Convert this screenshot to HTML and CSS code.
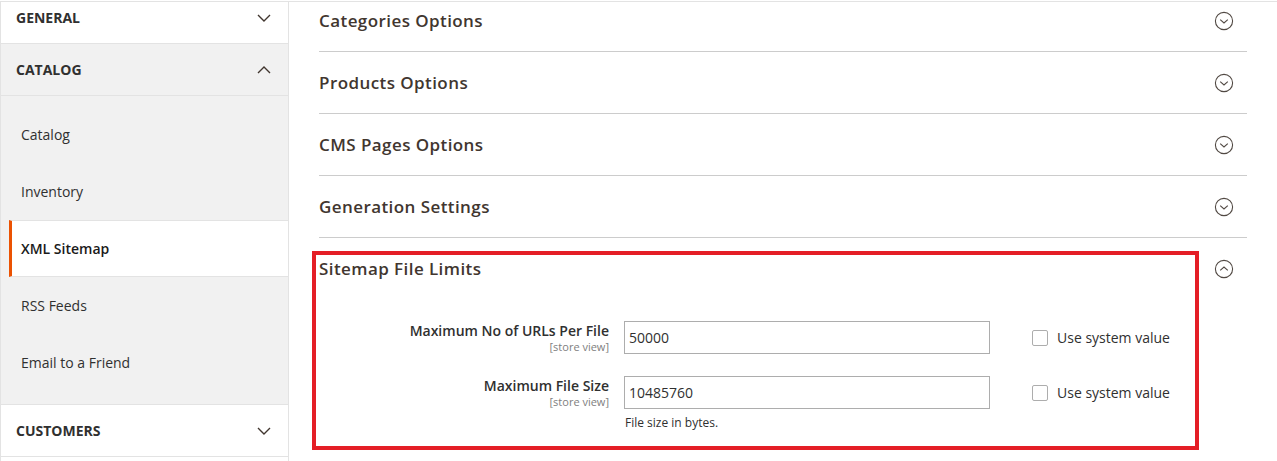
FILE: index.html
```html
<!DOCTYPE html>
<html lang="en">
<head>
  <meta charset="UTF-8" />
  <title>Configuration - XML Sitemap</title>
  <link rel="stylesheet" href="styles.css">
</head>
<body>
  <div class="layout">
    <aside class="sidebar">
      <div class="nav-title">
        <span>General</span>
        <svg class="chevron" width="14" height="8" viewBox="0 0 14 8"><polyline points="1,1 7,7 13,1" /></svg>
      </div>
      <div class="nav-title open">
        <span>Catalog</span>
        <svg class="chevron" width="14" height="8" viewBox="0 0 14 8"><polyline points="1,7 7,1 13,7" /></svg>
      </div>
      <ul class="nav-items">
        <li>Catalog</li>
        <li>Inventory</li>
        <li class="active">XML Sitemap</li>
        <li>RSS Feeds</li>
        <li>Email to a Friend</li>
      </ul>
      <div class="nav-title">
        <span>Customers</span>
        <svg class="chevron" width="14" height="8" viewBox="0 0 14 8"><polyline points="1,1 7,7 13,1" /></svg>
      </div>
    </aside>

    <main class="main">
      <section class="group">
        <div class="group-head">
          <h2>Categories Options</h2>
          <svg class="toggle" width="20" height="20" viewBox="0 0 20 20"><circle cx="10" cy="10" r="8.6" /><polyline points="6.2,8.6 10,12 13.8,8.6" /></svg>
        </div>
      </section>
      <section class="group">
        <div class="group-head">
          <h2>Products Options</h2>
          <svg class="toggle" width="20" height="20" viewBox="0 0 20 20"><circle cx="10" cy="10" r="8.6" /><polyline points="6.2,8.6 10,12 13.8,8.6" /></svg>
        </div>
      </section>
      <section class="group">
        <div class="group-head">
          <h2>CMS Pages Options</h2>
          <svg class="toggle" width="20" height="20" viewBox="0 0 20 20"><circle cx="10" cy="10" r="8.6" /><polyline points="6.2,8.6 10,12 13.8,8.6" /></svg>
        </div>
      </section>
      <section class="group">
        <div class="group-head">
          <h2>Generation Settings</h2>
          <svg class="toggle" width="20" height="20" viewBox="0 0 20 20"><circle cx="10" cy="10" r="8.6" /><polyline points="6.2,8.6 10,12 13.8,8.6" /></svg>
        </div>
      </section>
      <section class="group expanded">
        <div class="highlight"></div>
        <div class="group-head">
          <h2>Sitemap File Limits</h2>
          <svg class="toggle" width="20" height="20" viewBox="0 0 20 20"><circle cx="10" cy="10" r="8.6" /><polyline points="6.2,11.4 10,8 13.8,11.4" /></svg>
        </div>
        <div class="group-body">
          <div class="field">
            <label class="field-label">
              <span class="label-text">Maximum No of URLs Per File</span>
              <span class="scope">[store view]</span>
            </label>
            <div class="field-control">
              <input type="text" value="50000" />
            </div>
            <label class="use-default"><span class="box"></span>Use system value</label>
          </div>
          <div class="field">
            <label class="field-label">
              <span class="label-text">Maximum File Size</span>
              <span class="scope">[store view]</span>
            </label>
            <div class="field-control">
              <input type="text" value="10485760" />
              <p class="note">File size in bytes.</p>
            </div>
            <label class="use-default"><span class="box"></span>Use system value</label>
          </div>
        </div>
      </section>
    </main>
  </div>
</body>
</html>
```

FILE: styles.css
```css
body {
  margin: 0;
  font-family: 'Open Sans', 'Liberation Sans', sans-serif;
  background: #fff;
  color: #303030;
}
.layout {
  display: flex;
  margin-top: 1px;
  border-top: 1px solid #e3e3e3;
  height: 459px;
  overflow: hidden;
}

/* Sidebar */
.sidebar {
  width: 289px;
  flex-shrink: 0;
  box-sizing: border-box;
  border-left: 1px solid #e3e3e3;
  border-right: 1px solid #e3e3e3;
  margin-top: -10px;
}
.nav-title {
  height: 51px;
  display: flex;
  align-items: center;
  justify-content: space-between;
  padding: 0 17px 0 15px;
  border-bottom: 1px solid #e3e3e3;
  font-size: 14px;
  font-weight: 700;
  text-transform: uppercase;
  color: #303030;
  background: #fff;
}
.nav-title.open {
  background: #f1f1f1;
}
.chevron polyline {
  fill: none;
  stroke: #41362f;
  stroke-width: 1.4;
}
.nav-items {
  list-style: none;
  margin: 0;
  padding: 10px 0 13px 8px;
  background: #f1f1f1;
  border-bottom: 1px solid #e3e3e3;
}
.nav-items li {
  height: 55px;
  line-height: 56px;
  padding-left: 9px;
  border-left: 3px solid transparent;
  border-top: 1px solid transparent;
  border-bottom: 1px solid transparent;
  font-size: 14px;
  color: #303030;
}
.nav-items li.active {
  background: #fff;
  border-left-color: #eb5202;
  border-top-color: #e3e3e3;
  border-bottom-color: #e3e3e3;
  font-weight: 600;
  color: #1a1a1a;
}

/* Main */
.main {
  flex: 1;
  padding: 0 30px;
  margin-top: -12px;
}
.group {
  position: relative;
}
.group-head {
  height: 61px;
  display: flex;
  align-items: center;
  justify-content: space-between;
  border-bottom: 1px solid #cccccc;
}
.expanded .group-head {
  border-bottom: none;
  height: 61px;
}
.group-head h2 {
  margin: 0;
  font-size: 17px;
  font-weight: 600;
  letter-spacing: 0.025em;
  color: #41362f;
}
.toggle {
  margin-right: 13px;
}
.toggle circle, .toggle polyline {
  fill: none;
  stroke: #514943;
  stroke-width: 1.1;
}
.highlight {
  position: absolute;
  top: 13px;
  left: -7px;
  width: 887px;
  height: 199px;
  box-sizing: border-box;
  border: 4px solid #e41e26;
  pointer-events: none;
}

/* Form */
.group-body {
  padding: 22px 0 30px;
}
.field {
  display: grid;
  grid-template-columns: 290px 366px 1fr;
  column-gap: 15px;
  margin-bottom: 22px;
}
.field-label {
  display: flex;
  flex-direction: column;
  align-items: flex-end;
  text-align: right;
  padding-top: 1px;
}
.label-text {
  font-size: 14px;
  font-weight: 600;
  line-height: 18px;
  color: #303030;
}
.scope {
  font-size: 11px;
  line-height: 14px;
  color: #808080;
}
.field-control input {
  width: 100%;
  height: 33px;
  box-sizing: border-box;
  border: 1px solid #adadad;
  padding: 0 4px;
  font-family: 'Open Sans', 'Liberation Sans', sans-serif;
  font-size: 14px;
  color: #303030;
  margin: 0;
  display: block;
}
.note {
  margin: 6px 0 0 1px;
  font-size: 12px;
  line-height: 16px;
  color: #303030;
}
.use-default {
  display: flex;
  align-items: center;
  height: 33px;
  padding-left: 27px;
  font-size: 14px;
  color: #303030;
}
.use-default .box {
  width: 14px;
  height: 14px;
  border: 1px solid #adadad;
  border-radius: 2px;
  margin-right: 9px;
  background: #fff;
}
```
